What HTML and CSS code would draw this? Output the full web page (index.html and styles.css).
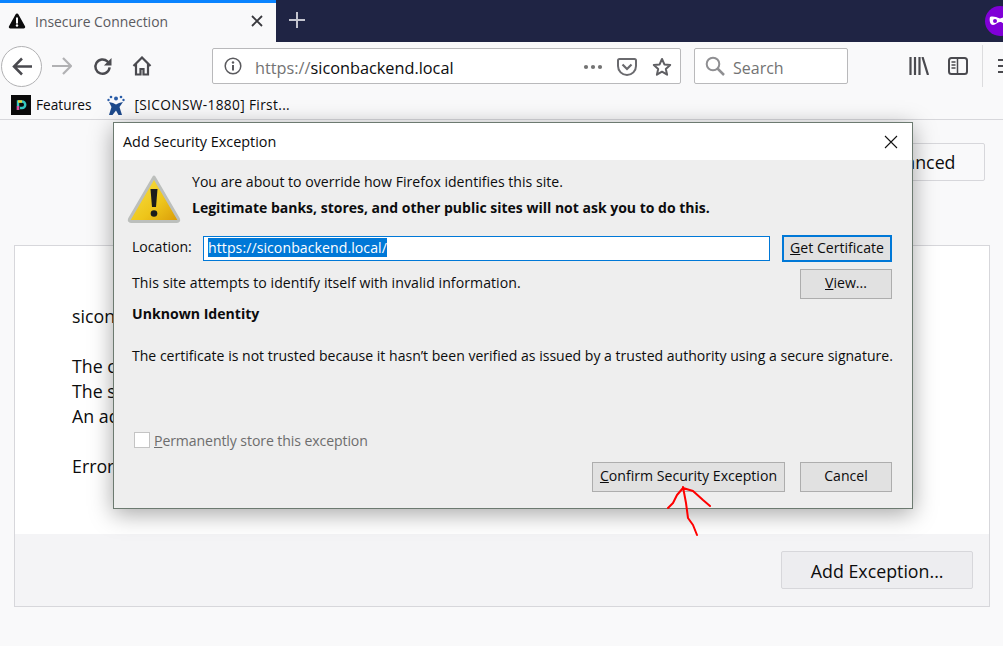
FILE: index.html
```html
<!DOCTYPE html>
<html>
<head>
  <title>Insecure Connection</title>
  <link rel="stylesheet" href="styles.css">
</head>
<body>
  <header class="browser">
    <div class="tabstrip">
      <div class="tab">
        <svg class="tab-icon" width="18" height="18" viewBox="0 0 18 18"><path d="M9 1.500c-.7 0-1.200.4-1.500 1L1 14.200c-.6 1.200.1 2.300 1.400 2.300h13.200c1.300 0 2-1.100 1.400-2.300L10.500 2.500c-.3-.6-.8-1-1.500-1z" fill="#0c0c0d"/><rect x="8" y="5.500" width="2" height="6" fill="#fff"/><circle cx="9" cy="13.500" r="1.200" fill="#fff"/></svg>
        <span class="tab-title">Insecure Connection</span>
        <svg class="tab-close" width="12" height="12" viewBox="0 0 12 12"><path d="M1 1l10 10M11 1L1 11" stroke="#38383d" stroke-width="1.800"/></svg>
      </div>
      <svg class="new-tab" width="18" height="18" viewBox="0 0 18 18"><path d="M9 1v16M1 9h16" stroke="#c3c4cf" stroke-width="2"/></svg>
      <div class="private-badge">
        <svg width="30" height="30" viewBox="0 0 30 30"><circle cx="15" cy="15" r="15" fill="#8000d7"/><path d="M5 11c3-1 6 0 10 1.500c4-1.500 7-2.500 10-1.500c1 3 0 8-3 8c-3 0-4-3-7-3s-4 3-7 3c-3 0-4-5-3-8z" fill="#fff"/><circle cx="10" cy="15" r="2" fill="#8000d7"/><circle cx="20" cy="15" r="2" fill="#8000d7"/></svg>
      </div>
    </div>

    <div class="navbar">
      <div class="back-btn">
        <svg width="20" height="19" viewBox="0 0 20 19"><path d="M10 1.500L2 9.500l8 8M2.500 9.500H20" fill="none" stroke="#4a4a4f" stroke-width="2.500"/></svg>
      </div>
      <svg class="nav-icon forward" width="20" height="18" viewBox="0 0 20 18"><path d="M11 1l8 8-8 8M18 9H0" fill="none" stroke="#b1b1b3" stroke-width="2.200"/></svg>
      <svg class="nav-icon reload" width="19" height="19" viewBox="0 0 20 20"><path d="M17.500 11a7.500 7.500 0 1 1-2.300-6.300L17 7" fill="none" stroke="#4a4a4f" stroke-width="2.600"/><path d="M19.500 1v8h-8z" fill="#4a4a4f"/></svg>
      <svg class="nav-icon home" width="20" height="20" viewBox="0 0 20 20"><path d="M1.500 10L10 1.500 18.500 10M4 8v10.500h4.500V13h3v5.500H16V8" fill="none" stroke="#4a4a4f" stroke-width="2.200"/></svg>

      <div class="urlbar">
        <svg class="info-icon" width="18" height="18" viewBox="0 0 18 18"><circle cx="9" cy="9" r="7.800" fill="none" stroke="#5a5a5e" stroke-width="1.500"/><rect x="8" y="8" width="2" height="5.500" fill="#5a5a5e"/><circle cx="9" cy="5.500" r="1.200" fill="#5a5a5e"/></svg>
        <span class="url"><span class="url-scheme">https://</span>siconbackend.local</span>
        <svg class="dots" width="20" height="6" viewBox="0 0 20 6"><circle cx="3" cy="3" r="2.100" fill="#737373"/><circle cx="10" cy="3" r="2.100" fill="#737373"/><circle cx="17" cy="3" r="2.100" fill="#737373"/></svg>
        <svg class="pocket" width="20" height="18" viewBox="0 0 20 18"><path d="M2.500 1h15c.8 0 1.500.7 1.500 1.500V8c0 5-4 9-9 9s-9-4-9-9V2.500C1 1.700 1.700 1 2.500 1z" fill="none" stroke="#6a6a6e" stroke-width="2"/><path d="M5.500 6.500L10 11l4.500-4.500" fill="none" stroke="#6a6a6e" stroke-width="2.200"/></svg>
        <svg class="star" width="20" height="20" viewBox="0 0 20 20"><path d="M10 2l2.400 5.400 5.800.6-4.400 3.900 1.300 5.800L10 14.700l-5.100 3 1.300-5.800L1.800 8l5.800-.6z" fill="none" stroke="#5f5f63" stroke-width="2" stroke-linejoin="round"/></svg>
      </div>

      <div class="searchbar">
        <svg width="20" height="20" viewBox="0 0 20 20"><circle cx="8" cy="8" r="6.300" fill="none" stroke="#8f8f92" stroke-width="2"/><path d="M12.500 12.500L19 19" stroke="#8f8f92" stroke-width="2.500"/></svg>
        <span class="search-text">Search</span>
      </div>

      <svg class="library" width="20" height="18" viewBox="0 0 20 18"><path d="M1.500 0v18M6 0v18M10.500 0v18M13.500 0L19 18" fill="none" stroke="#4a4a4f" stroke-width="2.200"/></svg>
      <svg class="sidebar-icon" width="20" height="18" viewBox="0 0 20 18"><rect x="1" y="1" width="18" height="16" rx="2.500" fill="none" stroke="#4a4a4f" stroke-width="2"/><path d="M9.500 1v16" stroke="#4a4a4f" stroke-width="1.500"/><path d="M3.500 5h4M3.500 8h4M3.500 11h4" stroke="#4a4a4f" stroke-width="1.300"/></svg>
      <div class="separator"></div>
      <svg class="menu-icon" width="16" height="16" viewBox="0 0 16 16"><path d="M0 2h16M0 8h16M0 14h16" stroke="#4a4a4f" stroke-width="2"/></svg>
    </div>

    <div class="bookmarks">
      <div class="bookmark first">
        <svg width="20" height="20" viewBox="0 0 20 20"><rect width="20" height="20" fill="#0a0a0a"/><path d="M7 15V6.500h4a3.200 3.200 0 0 1 0 6.500H9" fill="none" stroke="#35c8c0" stroke-width="2.400"/><path d="M7 6.500h4" stroke="#e8d53a" stroke-width="2.400"/><path d="M7 15v-4" stroke="#e04fa0" stroke-width="2.400"/></svg>
        <span>Features</span>
      </div>
      <div class="bookmark second">
        <svg width="18" height="20" viewBox="0 0 18 20"><circle cx="9" cy="3.500" r="2" fill="#2a5da8"/><circle cx="4" cy="2" r="1.300" fill="#2a5da8"/><circle cx="14" cy="2" r="1.300" fill="#2a5da8"/><circle cx="1.500" cy="5" r="1.200" fill="#2a5da8"/><circle cx="16.500" cy="5" r="1.200" fill="#2a5da8"/><path d="M2 7l4 1 3 1.500L12 8l4-1-3.500 5 2.500 8h-3.500L9 15.500 5.500 20H2l2.500-8z" fill="#1d4a8c"/></svg>
        <span>[SICONSW-1880] First...</span>
      </div>
    </div>
  </header>

  <main class="page">
    <div class="page-top">
      <button class="page-btn advanced-btn">Advanced</button>
    </div>
    <section class="panel">
      <div class="panel-text">
        <p>sicon</p>
        <p>The c<br>The s<br>An ad</p>
        <p>Error</p>
      </div>
      <div class="panel-footer">
        <button class="page-btn">Add Exception...</button>
      </div>
    </section>
  </main>

  <div class="dialog">
    <div class="dialog-title">
      <span>Add Security Exception</span>
      <svg width="14" height="14" viewBox="0 0 14 14"><path d="M1 1l12 12M13 1L1 13" stroke="#111" stroke-width="1.100"/></svg>
    </div>
    <div class="dialog-body">
      <div class="intro">
        <svg class="warn" width="54" height="50" viewBox="0 0 54 50">
          <defs><linearGradient id="warnfill" x1="0" y1="0" x2="1" y2="1"><stop offset="0" stop-color="#f7e34a"/><stop offset="0.600" stop-color="#eec51a"/><stop offset="1" stop-color="#d99a08"/></linearGradient></defs>
          <path d="M27 3L51.500 45c.6 1.400 0 2.500-1.500 2.500H4C2.500 47.500 1.900 46.400 2.500 45z" fill="url(#warnfill)" stroke="#bcbfbc" stroke-width="3" stroke-linejoin="round"/>
          <path d="M23.500 15h7l-1.500 18h-4z" fill="#1c1c1c"/><circle cx="27" cy="39.500" r="3.300" fill="#1c1c1c"/>
        </svg>
        <div class="intro-text">
          <p>You are about to override how Firefox identifies this site.</p>
          <p class="bold warning-line">Legitimate banks, stores, and other public sites will not ask you to do this.</p>
        </div>
      </div>

      <div class="location-row">
        <label>Location:</label>
        <div class="location-input"><span class="selected">https://siconbackend.local/</span></div>
        <button class="dlg-btn focused"><u>G</u>et Certificate</button>
      </div>

      <div class="status-row">
        <span>This site attempts to identify itself with invalid information.</span>
        <button class="dlg-btn view-btn"><u>V</u>iew...</button>
      </div>

      <div class="identity bold">Unknown Identity</div>
      <p class="reason">The certificate is not trusted because it hasn’t been verified as issued by a trusted authority using a secure signature.</p>

      <div class="store-row">
        <span class="checkbox"></span>
        <span><u>P</u>ermanently store this exception</span>
      </div>

      <div class="dialog-actions">
        <button class="dlg-btn confirm-btn"><u>C</u>onfirm Security Exception</button>
        <button class="dlg-btn cancel-btn">Cancel</button>
      </div>
    </div>
  </div>

  <!-- red arrow scribbled on the screenshot -->
  <svg class="scribble" width="60" height="60" viewBox="660 480 60 60"><path d="M697 535L693 525L688 518L686 503L683 487M668 508L673 503L677 495L683 488L693 491L703 500L710 506" fill="none" stroke="#f00" stroke-width="2" stroke-linecap="round" stroke-linejoin="round"/></svg>
</body>
</html>
```

FILE: styles.css
```css
body {
  font-family: "Open Sans", "Noto Sans", sans-serif;
  margin: 0;
  width: 1003px;
  height: 646px;
  overflow: hidden;
  background-color: #f9f9fa;
  color: #0c0c0d;
}

p {
  margin: 0;
}

svg {
  flex: none;
}

.bold {
  font-weight: 700;
}

/* browser chrome */
.tabstrip {
  display: flex;
  align-items: center;
  height: 42px;
  background-color: #1f2444;
}

.tab {
  display: flex;
  align-items: center;
  flex: none;
  box-sizing: border-box;
  width: 276px;
  height: 42px;
  padding: 0 13px 3px 8px;
  background-color: #f9f9fa;
  border-top: 3px solid #0a84ff;
}

.tab-title {
  flex: 1;
  margin-left: 9px;
  font-size: 13.900px;
  color: #5b5b60;
}

.new-tab {
  margin: 0 0 2px 12px;
}

.private-badge {
  margin-left: auto;
  margin-right: -12px;
  height: 30px;
}

.navbar {
  display: flex;
  align-items: center;
  height: 48px;
  padding-left: 1px;
  background-color: #f9f9fa;
}

.back-btn {
  display: flex;
  align-items: center;
  justify-content: center;
  flex: none;
  box-sizing: border-box;
  width: 41px;
  height: 41px;
  background-color: #fff;
  border: 1px solid #b1b1b3;
  border-radius: 50%;
}

.forward {
  margin-left: 10px;
}

.reload {
  margin-left: 21px;
}

.home {
  margin-left: 20px;
}

.urlbar,
.searchbar {
  display: flex;
  align-items: center;
  flex: none;
  box-sizing: border-box;
  height: 36px;
  background-color: #fff;
  border: 1px solid #b9b9bb;
  border-radius: 2px;
}

.urlbar {
  width: 469px;
  margin-left: 60px;
  padding: 0 8px 0 11px;
}

.url {
  flex: 1;
  margin: 4px 0 0 13px;
  font-size: 16.300px;
}

.url-scheme {
  color: #737373;
}

.dots {
  margin: 2px 14px 0 0;
}

.pocket {
  margin: 2px 15px 0 0;
}

.star {
  margin-top: 2px;
}

.searchbar {
  width: 154px;
  margin-left: 13px;
  padding-left: 10px;
}

.search-text {
  margin: 4px 0 0 8px;
  font-size: 16px;
  color: #737373;
}

.library {
  margin-left: 61px;
}

.sidebar-icon {
  margin-left: 19px;
}

.separator {
  flex: none;
  width: 1px;
  height: 42px;
  margin-left: 14px;
  background-color: #dcdcde;
}

.menu-icon {
  margin-left: 15px;
}

.bookmarks {
  display: flex;
  align-items: center;
  height: 29px;
  padding-left: 11px;
  font-size: 13.700px;
  background-color: #f9f9fa;
  border-bottom: 1px solid #d7d7db;
}

.bookmark {
  display: flex;
  align-items: center;
  gap: 5px;
}

.second {
  gap: 9px;
  margin-left: 16px;
}

.second span {
  letter-spacing: 0.35px;
}

/* page behind the dialog */
.page-top {
  display: flex;
  justify-content: flex-end;
  padding: 23px 18px 0 0;
}

.page-btn {
  height: 38px;
  padding: 2px 28.500px 0;
  font-family: inherit;
  font-size: 17.800px;
  color: #0c0c0d;
  background-color: #ededf0;
  border: 1px solid #d7d7db;
  border-radius: 2px;
}

.advanced-btn {
  padding-top: 0;
  background-color: #f9f9fa;
}

.panel {
  box-sizing: border-box;
  width: 976px;
  height: 362px;
  margin: 64px 0 0 14px;
  background-color: #fff;
  border: 1px solid #d7d7db;
}

.panel-text {
  height: 288px;
  padding: 58px 0 0 57px;
  box-sizing: border-box;
  font-size: 17.800px;
  line-height: 25px;
}

.panel-text p {
  margin-bottom: 25px;
}

.panel-footer {
  display: flex;
  justify-content: flex-end;
  height: 72px;
  padding: 17px 16px 0 0;
  box-sizing: border-box;
  background-color: #f4f4f6;
}

/* dialog */
.dialog {
  position: absolute;
  top: 122px;
  left: 113px;
  box-sizing: border-box;
  width: 800px;
  height: 387px;
  font-size: 14.100px;
  background-color: #eeeeee;
  border: 1px solid #6c7a70;
  box-shadow: 0 5px 22px rgba(0, 0, 0, 0.35);
}

.dialog-title {
  display: flex;
  align-items: center;
  justify-content: space-between;
  height: 37px;
  padding: 0 14px 0 9px;
  font-size: 14.400px;
  background-color: #fff;
}

.dialog-body {
  padding: 0 20px 0 18px;
}

.intro {
  display: flex;
  height: 75px;
  padding-top: 12px;
  box-sizing: border-box;
}

.warn {
  margin: 2px 0 0 -5px;
}

.intro-text {
  margin-left: 11px;
}

.intro-text p {
  height: 26px;
  line-height: 20px;
}

.intro-text .warning-line {
  font-size: 14px;
}

.location-row {
  display: flex;
  align-items: center;
  height: 27px;
}

.location-row label {
  width: 71px;
  padding-bottom: 4px;
}

.location-input {
  display: flex;
  align-items: center;
  flex: none;
  box-sizing: border-box;
  width: 567px;
  height: 25px;
  padding: 0 0 2px 4px;
  background-color: #fff;
  border: 1px solid #0078d7;
}

.selected {
  letter-spacing: 0.07px;
  color: #fff;
  background-color: #0078d7;
}

.dlg-btn {
  box-sizing: border-box;
  height: 30px;
  padding: 0 0 3px;
  font-family: inherit;
  font-size: 14.100px;
  color: #0c0c0d;
  background-color: #e1e1e1;
  border: 1px solid #adadad;
}

.focused {
  flex: none;
  width: 110px;
  height: 27px;
  margin-left: 12px;
  padding-bottom: 2px;
  border: 2px solid #0078d7;
}

.status-row {
  display: flex;
  align-items: flex-start;
  justify-content: space-between;
  height: 38px;
  padding-top: 7px;
  box-sizing: border-box;
}

.status-row span {
  margin-top: 4px;
  letter-spacing: 0.06px;
}

.view-btn {
  width: 92px;
}

.identity {
  margin-top: 4px;
  line-height: 20px;
}

.reason {
  margin-top: 22px;
  font-size: 14.050px;
  line-height: 20px;
  white-space: nowrap;
}

.store-row {
  display: flex;
  align-items: center;
  gap: 4px;
  height: 20px;
  margin: 64px 0 0 2px;
  letter-spacing: -0.1px;
  color: #6d6d6d;
}

.checkbox {
  box-sizing: border-box;
  width: 16px;
  height: 16px;
  background-color: #fff;
  border: 1px solid #c4c4c4;
}

.dialog-actions {
  display: flex;
  justify-content: flex-end;
  gap: 15px;
  margin-top: 12px;
}

.confirm-btn {
  width: 193px;
}

.cancel-btn {
  width: 92px;
}

.scribble {
  position: absolute;
  top: 480px;
  left: 660px;
}
```
